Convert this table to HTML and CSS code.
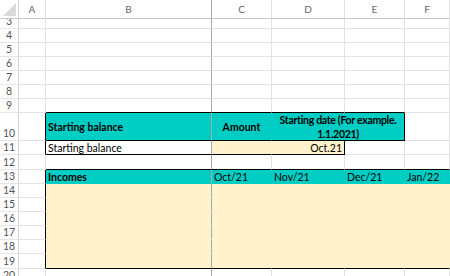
FILE: index.html
```html
<!DOCTYPE html>
<html lang="en">
<head>
    <meta charset="UTF-8">
    <meta name="viewport" content="width=device-width, initial-scale=1.0">
    <title>Budget</title>
    <link rel="stylesheet" href="styles.css">
</head>
<body>
    <div class="sheet">
        <!-- Cabecera de columnas -->
        <div class="corner">
            <svg width="19" height="19" viewBox="0 0 19 19"><polygon points="16,3 16,16 3,16" fill="#dadada"/></svg>
        </div>
        <div class="col">A</div>
        <div class="col frz">B</div>
        <div class="col">C</div>
        <div class="col">D</div>
        <div class="col">E</div>
        <div class="col">F</div>

        <!-- Filas 3 - 9 vacías -->
        <div class="row">3</div>
        <div class="cell"></div><div class="cell frz"></div><div class="cell"></div><div class="cell"></div><div class="cell"></div><div class="cell"></div>
        <div class="row">4</div>
        <div class="cell"></div><div class="cell frz"></div><div class="cell"></div><div class="cell"></div><div class="cell"></div><div class="cell"></div>
        <div class="row">5</div>
        <div class="cell"></div><div class="cell frz"></div><div class="cell"></div><div class="cell"></div><div class="cell"></div><div class="cell"></div>
        <div class="row">6</div>
        <div class="cell"></div><div class="cell frz"></div><div class="cell"></div><div class="cell"></div><div class="cell"></div><div class="cell"></div>
        <div class="row">7</div>
        <div class="cell"></div><div class="cell frz"></div><div class="cell"></div><div class="cell"></div><div class="cell"></div><div class="cell"></div>
        <div class="row">8</div>
        <div class="cell"></div><div class="cell frz"></div><div class="cell"></div><div class="cell"></div><div class="cell"></div><div class="cell"></div>
        <div class="row">9</div>
        <div class="cell"></div><div class="cell frz bb"></div><div class="cell bb"></div><div class="cell bb"></div><div class="cell bb"></div><div class="cell"></div>

        <!-- Saldo inicial -->
        <div class="row">10</div>
        <div class="cell br"></div>
        <div class="cell teal bold frz bb">Starting balance</div>
        <div class="cell teal bold center bb">Amount</div>
        <div class="cell teal bold center wrap span2 br bb">Starting date (For example. 1.1.2021)</div>
        <div class="cell"></div>

        <div class="row">11</div>
        <div class="cell br"></div>
        <div class="cell frz bb">Starting balance</div>
        <div class="cell cream bb"></div>
        <div class="cell cream right br bb">Oct.21</div>
        <div class="cell"></div>
        <div class="cell"></div>

        <div class="row">12</div>
        <div class="cell"></div><div class="cell frz bb"></div><div class="cell bb"></div><div class="cell bb"></div><div class="cell bb"></div><div class="cell bb"></div>

        <!-- Ingresos -->
        <div class="row">13</div>
        <div class="cell br"></div>
        <div class="cell teal bold frz">Incomes</div>
        <div class="cell teal">Oct/21</div>
        <div class="cell teal">Nov/21</div>
        <div class="cell teal">Dec/21</div>
        <div class="cell teal">Jan/22</div>

        <div class="row">14</div>
        <div class="cell br"></div><div class="cell cream frz"></div><div class="cell cream"></div><div class="cell cream"></div><div class="cell cream"></div><div class="cell cream"></div>
        <div class="row">15</div>
        <div class="cell br"></div><div class="cell cream frz"></div><div class="cell cream"></div><div class="cell cream"></div><div class="cell cream"></div><div class="cell cream"></div>
        <div class="row">16</div>
        <div class="cell br"></div><div class="cell cream frz"></div><div class="cell cream"></div><div class="cell cream"></div><div class="cell cream"></div><div class="cell cream"></div>
        <div class="row">17</div>
        <div class="cell br"></div><div class="cell cream frz"></div><div class="cell cream"></div><div class="cell cream"></div><div class="cell cream"></div><div class="cell cream"></div>
        <div class="row">18</div>
        <div class="cell br"></div><div class="cell cream frz"></div><div class="cell cream"></div><div class="cell cream"></div><div class="cell cream"></div><div class="cell cream"></div>
        <div class="row">19</div>
        <div class="cell br"></div><div class="cell cream frz bb"></div><div class="cell cream bb"></div><div class="cell cream bb"></div><div class="cell cream bb"></div><div class="cell cream bb"></div>

        <div class="row">20</div>
        <div class="cell"></div><div class="cell frz"></div><div class="cell"></div><div class="cell"></div><div class="cell"></div><div class="cell"></div>
    </div>
</body>
</html>
```

FILE: styles.css
```css
* {
    margin: 0;
    padding: 0;
    box-sizing: border-box;
}

body {
    width: 450px;
    height: 276px;
    overflow: hidden;
    background: #fff;
    font-family: 'Lato', 'Noto Sans', sans-serif;
}

.sheet {
    display: grid;
    grid-template-columns: 19px 27px 166px 60px 73px 60px 45px;
    grid-template-rows: 19px 10px repeat(6, 14px) 28px 14px 15px 14px repeat(5, 14px) 15px 14px;
}

.corner {
    border-right: 1px solid #d4d4d4;
    border-bottom: 1px solid #c8c8c8;
}

.corner svg {
    display: block;
}

.col {
    display: flex;
    align-items: center;
    justify-content: center;
    font-size: 10px;
    color: #666;
    border-right: 1px solid #e2e2e2;
    border-bottom: 1px solid #c8c8c8;
}

.row {
    display: flex;
    align-items: flex-end;
    justify-content: center;
    padding-bottom: 1px;
    font-size: 10.5px;
    line-height: 12px;
    color: #555;
    overflow: hidden;
    border-right: 1px solid #d4d4d4;
    border-bottom: 1px solid #e6e6e6;
}

.cell {
    display: flex;
    align-items: center;
    padding: 0 2px;
    font-size: 10.5px;
    color: #000;
    white-space: nowrap;
    overflow: hidden;
    border-right: 1px solid #e2e2e2;
    border-bottom: 1px solid #e2e2e2;
}

.teal {
    background: #00cdc4;
    border-color: #00cdc4;
}

.cream {
    background: #fff2cc;
    border-color: #fff2cc;
}

.bold {
    font-weight: bold;
}

.center {
    justify-content: center;
    text-align: center;
}

.wrap {
    white-space: normal;
    line-height: 14px;
    letter-spacing: -0.3px;
}

.right {
    justify-content: flex-end;
}

.span2 {
    grid-column: span 2;
}

.frz {
    border-right-color: #a9a9a9;
}

.bb {
    border-bottom-color: #000;
}

.br {
    border-right-color: #000;
}
```
